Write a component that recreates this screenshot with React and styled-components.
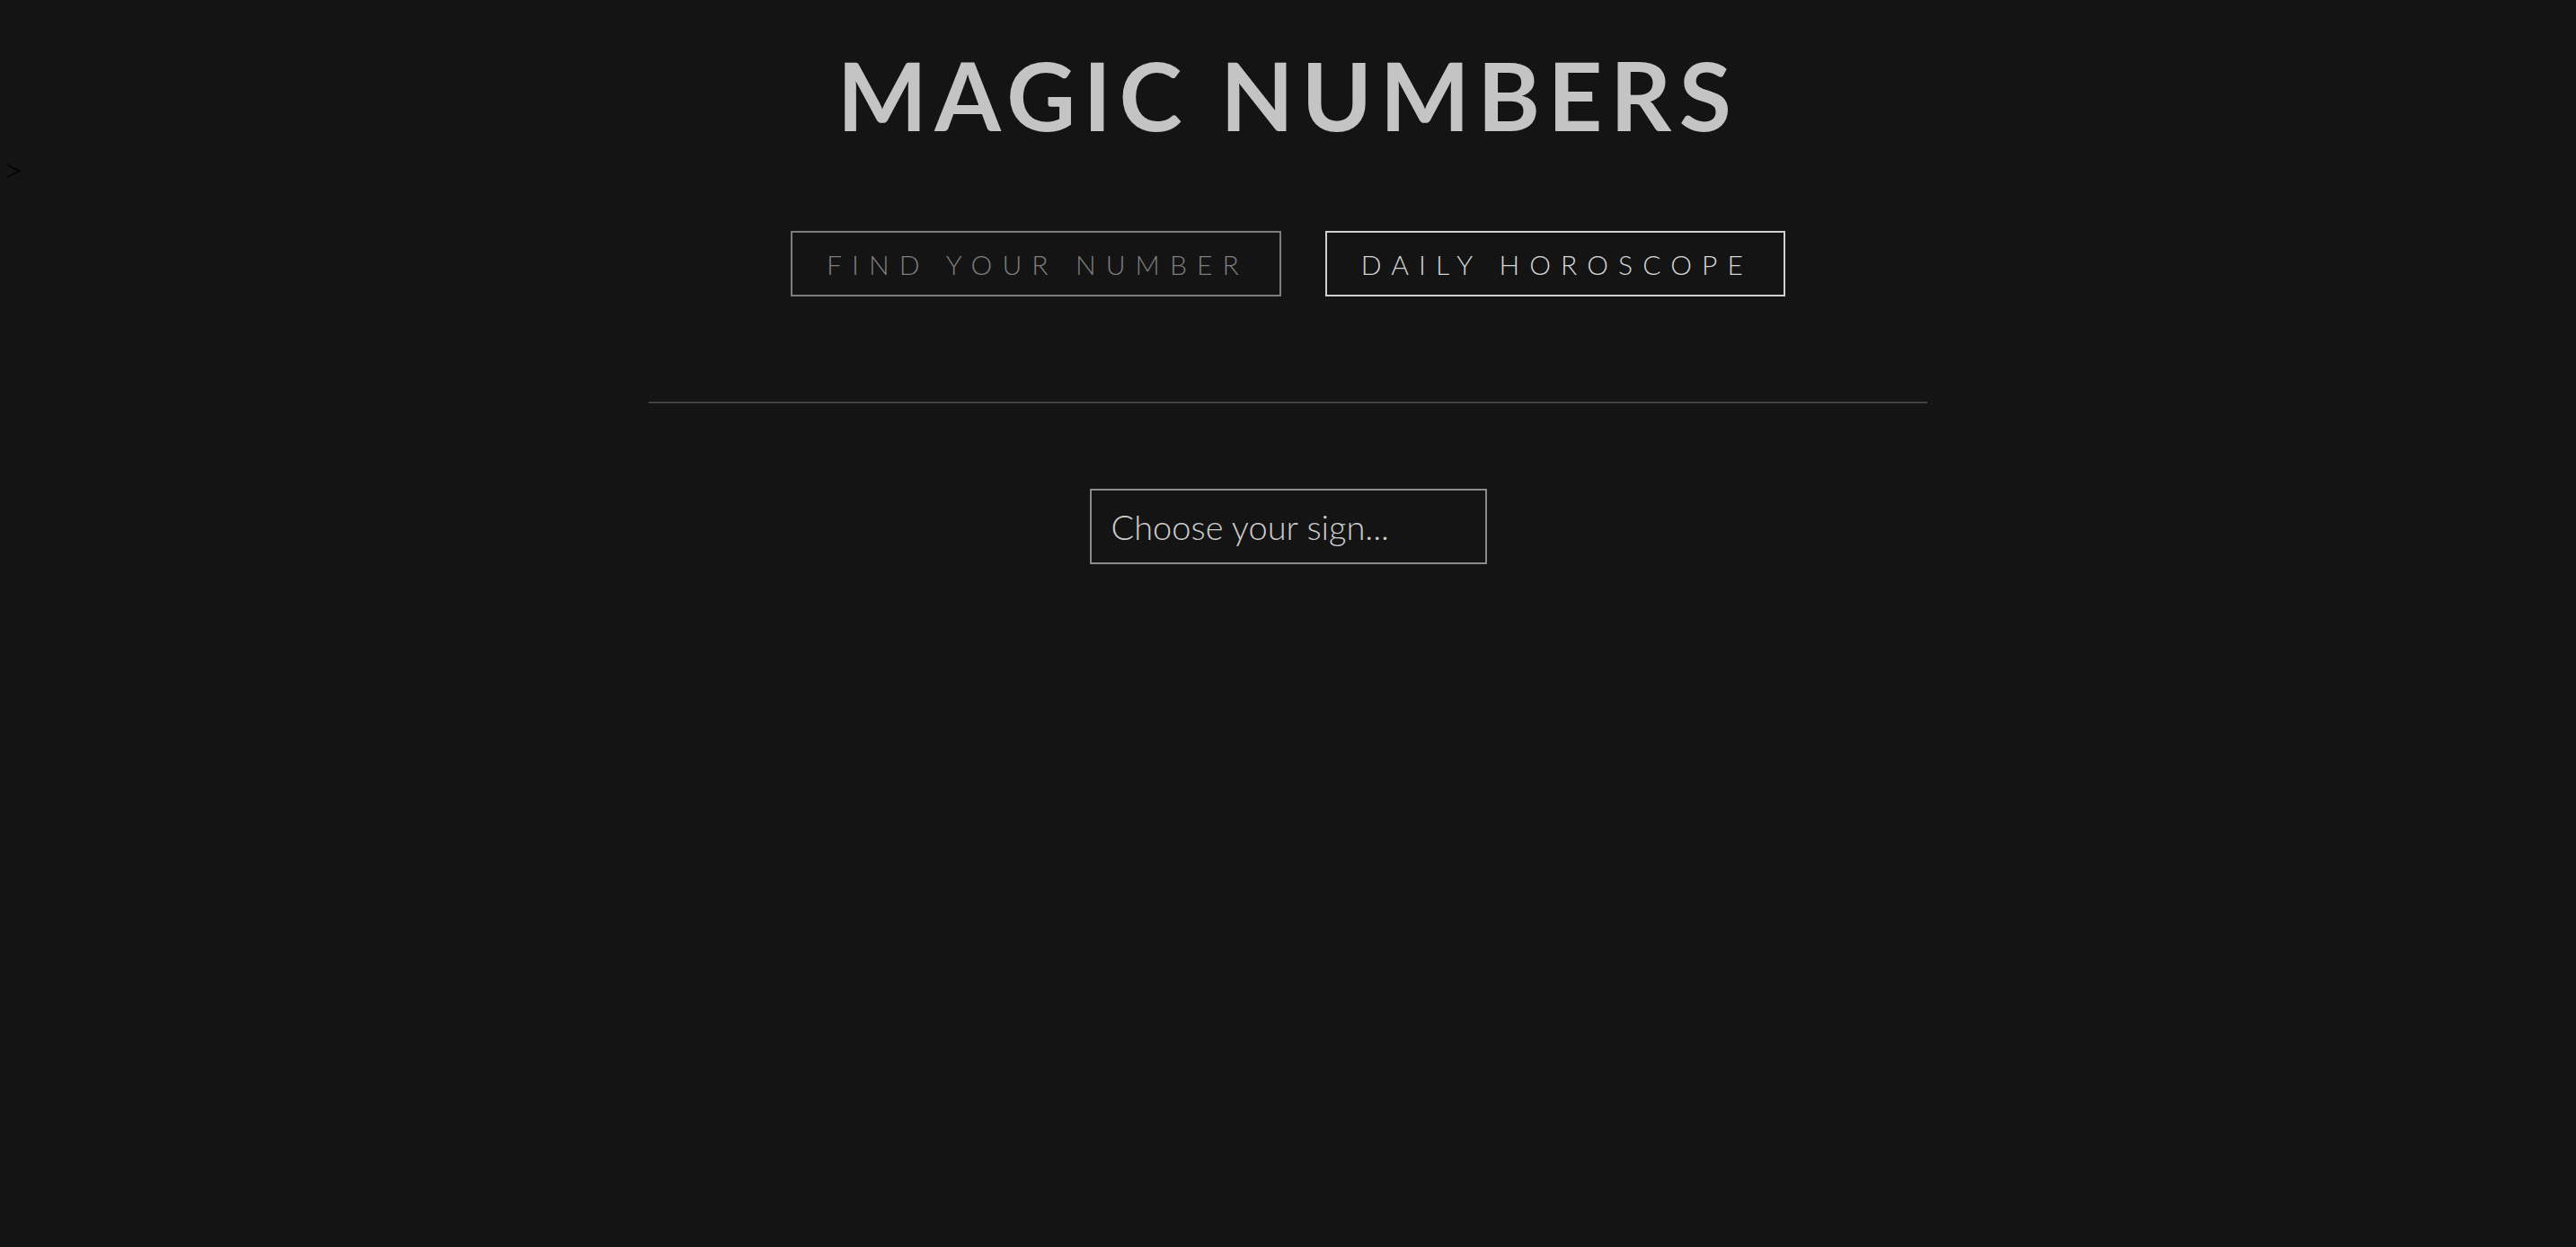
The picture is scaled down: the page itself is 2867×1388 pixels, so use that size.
import React, { useState } from 'react';
import styled, { createGlobalStyle } from 'styled-components';

const GlobalStyle = createGlobalStyle`
body{
    margin: 0;
    background: #141414;
    font-family: Lato, "Open Sans", sans-serif;
}
`

const signs = ['Aries', 'Taurus', 'Gemini', 'Cancer', 'Leo', 'Virgo', 'Libra', 'Scorpio', 'Sagittarius', 'Capricorn', 'Aquarius', 'Pisces'];

function App() {
  const [page, setPage] = useState('horoscope');
  const [sign, setSign] = useState('');

  return (
    <>
      <GlobalStyle />
      <Title>MAGIC NUMBERS</Title>
      <Stray>&gt;</Stray>
      <Nav>
        <NavButton active={page === 'number'} onClick={() => setPage('number')}>FIND YOUR NUMBER</NavButton>
        <NavButton active={page === 'horoscope'} onClick={() => setPage('horoscope')}>DAILY HOROSCOPE</NavButton>
      </Nav>
      <Divider />
      <Content>
        <SignSelect value={sign} onChange={(e) => setSign(e.target.value)}>
          <option value="">Choose your sign...</option>
          {signs.map((s) => <option key={s} value={s}>{s}</option>)}
        </SignSelect>
      </Content>
    </>
  );
}

const Title = styled.h1`
margin: 42px 0 0;
text-align: center;
font-size: 106px;
line-height: 1.2;
font-weight: bold;
letter-spacing: 0.08em;
color: #c4c4c4;
`

const Stray = styled.div`
margin: 4px 0 0 6px;
height: 34px;
font-family: "Liberation Serif", serif;
font-size: 32px;
line-height: 34px;
color: #000;
`

const Nav = styled.nav`
display: flex;
justify-content: center;
gap: 49px;
margin-top: 50px;
`

const NavButton = styled.button`
height: 73px;
padding: 0 34px 0 38px;
background: transparent;
border: 2px solid ${(p) => (p.active ? '#cfcfcf' : '#7d7d7d')};
color: ${(p) => (p.active ? '#d4d4d4' : '#7d7d7d')};
font-family: Lato, "Open Sans", sans-serif;
font-size: 30px;
font-weight: 300;
letter-spacing: 0.37em;
cursor: pointer;
`

const Divider = styled.hr`
width: 1423px;
margin: 117px auto 0;
border: none;
border-top: 2px solid #424242;
`

const Content = styled.div`
display: flex;
justify-content: center;
margin-top: 95px;
`

const SignSelect = styled.select`
appearance: none;
width: 442px;
height: 84px;
padding: 0 22px;
background: transparent;
border: 2px solid #8a8a8a;
border-radius: 0;
color: #cccccc;
font-family: Lato, "Open Sans", sans-serif;
font-size: 38px;
font-weight: 300;
`

export default App;
